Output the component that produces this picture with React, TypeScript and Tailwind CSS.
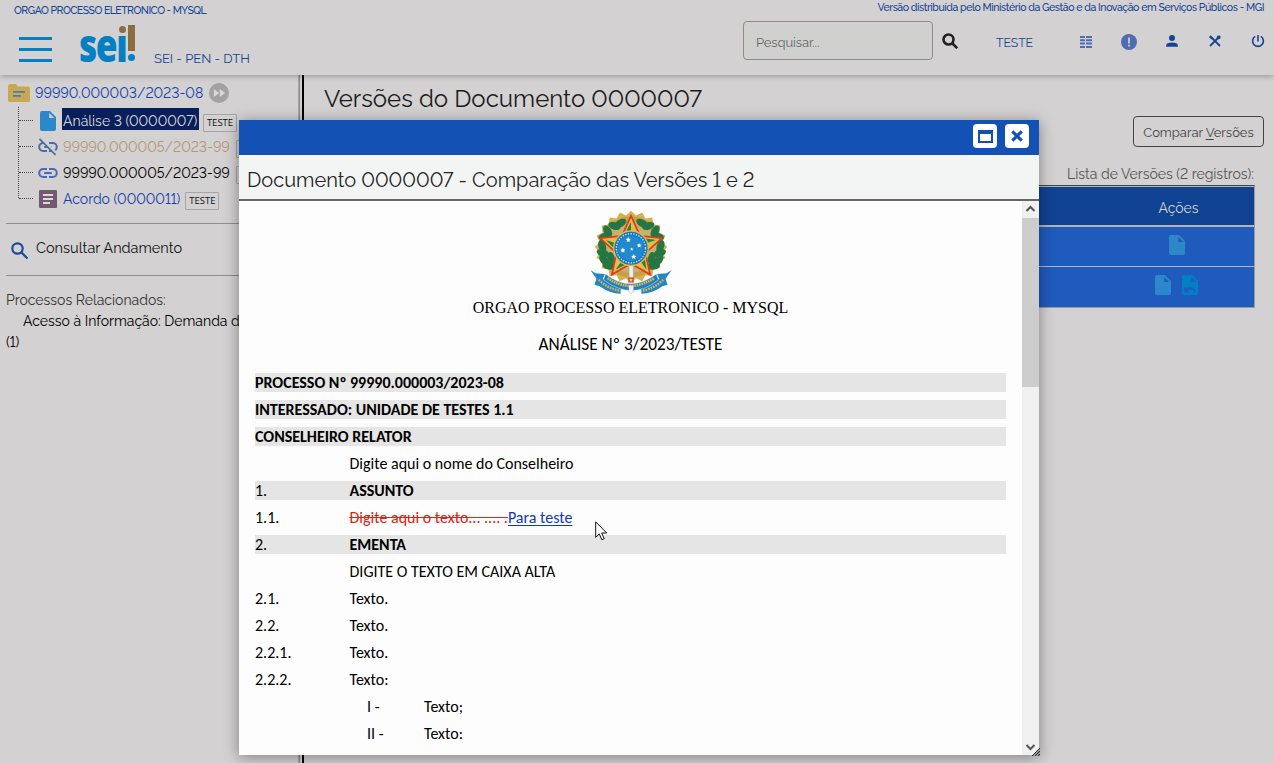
import React from "react";

type TProps = { className?: string; children: React.ReactNode };
const T = ({ className = "", children }: TProps) => (
  <span className={"inline-block shrink-0 whitespace-nowrap " + className}>{children}</span>
);

const DocIcon = ({ undo = false }: { undo?: boolean }) => (
  <svg viewBox="0 0 16 20" className="h-5 w-4 shrink-0">
    <path fill={undo ? "#0380c4" : "#2d88c9"} fillRule="evenodd" d="M2 0H10L16 6V18a2 2 0 0 1-2 2H2a2 2 0 0 1-2-2V2a2 2 0 0 1 2-2zM9.2 2V7H14.2z" />
    {undo && <path d="M2.2 11.800v5.400h5.400l-2-2q3.900-2 6.700 1.700l1.800-.9q-4.500-6.200-10-2.300z" fill="#1f5bbd" />}
  </svg>
);

const LinkIcon = ({ off = false }: { off?: boolean }) => (
  <svg viewBox="0 0 20 18" className="h-[18px] w-5 shrink-0" fill="none" stroke="#4a6bb0" strokeWidth="2">
    <path d="M9 5H5.200a4 4 0 0 0 0 8H9M11 5h3.800a4 4 0 0 1 0 8H11M6.200 9h7.600" />
    {off && <path d="M3.200 0L19 16" stroke="#d3d1d1" strokeWidth="2.500" />}
    {off && <path d="M1.500 .8L17.500 16.800" stroke="#4f719f" strokeWidth="1.800" />}
  </svg>
);

const star = (cx: number, cy: number, R: number, r: number, n = 5) =>
  Array.from({ length: n * 2 }, (_, i) => {
    const a = -Math.PI / 2 + (i * Math.PI) / n;
    const q = i % 2 ? r : R;
    return `${(cx + q * Math.cos(a)).toFixed(1)},${(cy + q * Math.sin(a)).toFixed(1)}`;
  }).join(" ");

const leaves = [
  [180, 68, -30], [162, 76, 20], [142, 92, 60], [134, 108, -10], [126, 136, 70], [128, 156, 20], [132, 178, 50], [146, 194, 10], [152, 172, 80],
  [244, 68, 30], [262, 76, -20], [282, 92, -60], [290, 108, 10], [298, 136, -70], [296, 156, -20], [292, 178, -50], [278, 194, -10], [272, 172, -80],
];

const Emblem = () => (
  <svg viewBox="87 29 248 254" className="h-[86px] w-[84px]">
    <polygon points={star(211, 138, 107, 94, 20)} fill="#d5b050" />
    <circle cx="211" cy="138" r="90" fill="#c79d45" />
    <circle cx="211" cy="138" r="76" fill="#c9b06a" />
    {leaves.map(([x, y, a], i) => (
      <ellipse key={i} cx={x} cy={y} rx="19" ry="11" fill="#227744" transform={`rotate(${a} ${x} ${y})`} />
    ))}
    <path d="M205 190h13v78q-6 12-13 0z" fill="#edf0f2" stroke="#9aa7b4" strokeWidth="2" />
    <polygon points={star(211, 142, 96, 45)} fill="#e9bd43" stroke="#db3b22" strokeWidth="5" />
    {[0, 72, 144, 216, 288].map((a) => (
      <path key={a} d="M211 64V112L188 109z" fill="#258049" transform={`rotate(${a} 211 142)`} />
    ))}
    <circle cx="211" cy="142" r="51" fill="#1678bd" stroke="#e4b83f" strokeWidth="4" />
    <circle cx="211" cy="142" r="43" fill="none" stroke="#cfe4f3" strokeWidth="4" strokeDasharray="4 4" />
    <circle cx="211" cy="142" r="38" fill="#2189cf" />
    {[[203, 117, 8], [187, 148, 8], [219, 167, 8], [235, 134, 7], [213, 145, 5]].map(([x, y, r], i) => (
      <polygon key={i} points={star(x, y, r, r * 0.5)} fill="#fff" />
    ))}
    <path d="M91 206l15 10 28 2-6 14 16 8 40 10-4 26q-30 0-62-22l-15-4 6-18zM331 206l-15 10-28 2 6 14-16 8-40 10 4 26q30 0 62-22l15-4-6-18z" fill="#2386c7" />
    <path d="M136 218q38 30 75 29t75-29l6 17q-40 33-81 32t-81-32z" fill="#1e80c3" stroke="#e5edf2" strokeWidth="1.500" />
    <path d="M142 230q36 24 69 23t69-23" fill="none" stroke="#d7b44b" strokeWidth="8" strokeDasharray="5 2" />
    <path d="M116 235q28 28 66 33M306 235q-28 28-66 33" fill="none" stroke="#d7b44b" strokeWidth="7" strokeDasharray="5 3" />
    <path d="M203 228h16v15h-16z" fill="#d94727" />
    <polygon points={star(211, 236, 6, 3)} fill="#f4d468" />
    <path d="M205 252h13v18q-6 12-13 0z" fill="#f3f5f6" stroke="#b7c3ca" strokeWidth="1.500" />
  </svg>
);

const Tag = ({ className = "", label = "TESTE" }: { className?: string; label?: string }) => (
  <span className={"mt-1.5 flex h-[18px] w-[34px] shrink-0 items-center justify-center rounded-[1px] border border-[#a5a5a5] font-['Open_Sans',sans-serif] text-[9.500px] text-[#111] " + className}><T>{label}</T></span>
);

const Row = ({ num, children, shade = false }: { num?: string; children?: React.ReactNode; shade?: boolean }) => (
  <div className={"mb-2 flex h-[19px] shrink-0 items-center whitespace-nowrap " + (shade ? "bg-[#e5e5e5]" : "")}>
    {num !== undefined && <span className="w-[94.500px] shrink-0">{num}</span>}
    {children}
  </div>
);

const Branch = ({ children }: { children: React.ReactNode }) => (
  <div className="flex h-[26px] shrink-0 items-center">
    <i className="ml-[19px] w-[14px] shrink-0 border-t border-dotted border-[#444]" />
    {children}
  </div>
);

export default function App() {
  return (
    <div className="relative flex h-[763px] w-[1274px] flex-col overflow-hidden bg-[#d3d1d1] font-['Raleway','Lato',sans-serif] text-[14px] lining-nums text-[#1b1b1b]">
      <header className="z-10 flex h-[75px] shrink-0 flex-col bg-[#d3d1d1] shadow-[0_1px_6px_rgba(0,0,0,0.3)]">
        <div className="flex h-[18px] items-start justify-between pl-[14px] pr-[10px] text-[10.500px] font-medium text-[#154596]">
          <T className="mt-[2px] leading-4 tracking-[-0.52px]">ORGAO PROCESSO ELETRONICO - MYSQL</T>
          <T className="leading-[15px] tracking-[-0.43px]">Versão distribuída pelo Ministério da Gestão e da Inovação em Serviços Públicos - MGI</T>
        </div>
        <div className="flex h-[57px] items-start text-[#154596]">
          <div className="ml-[19px] mt-[19px] flex w-[33px] shrink-0 flex-col gap-2">
            <i className="h-[3px] bg-[#0380c4]" /><i className="h-[3px] bg-[#0380c4]" /><i className="h-[3px] bg-[#0380c4]" />
          </div>
          <div className="relative ml-[27px] mt-[6px] h-[40px] w-[57px] shrink-0">
            <span className="absolute left-0 top-[-2px] origin-left scale-x-[0.77] font-['Open_Sans'] text-[46px] font-extrabold leading-[44px] tracking-[-2px] text-[#0380c4]">seı</span>
            <i className="absolute left-[40px] top-[2px] size-[7px] rounded-full bg-[#8a6e42]" />
            <i className="absolute left-[49px] top-[1px] h-[26px] w-[7px] bg-[#8a6e42]" />
            <i className="absolute left-[49px] top-[30px] size-[7px] rounded-full bg-[#0380c4]" />
          </div>
          <T className="ml-[18px] mt-[31px] text-[13px] leading-5">SEI - PEN - DTH</T>
          <div className="ml-auto mt-[3px] flex h-[39px] w-[190px] items-center rounded-[4px] border border-[#8b8b8b] bg-[#d0d0cf] pl-3 pt-1 text-[13px] text-[#686868]"><T className="tracking-[-0.1px]">Pesquisar...</T></div>
          <svg viewBox="0 0 16 16" className="ml-[9px] mt-[15px] size-4 shrink-0" fill="none" stroke="#222" strokeWidth="2.600"><circle cx="6.500" cy="6.500" r="5" /><path d="M10 10l5.200 5.200" /></svg>
          <T className="ml-[38px] mt-[15px] text-[12.200px] leading-5">TESTE</T>
          <svg viewBox="0 0 12 12" className="ml-[47px] mt-[18px] size-3 shrink-0" fill="#4f6cb3"><path d="M0 0h5v2H0zM6 0h6v2H6zM0 3.300h5v2H0zM6 3.300h6v2H6zM0 6.600h5v2H0zM6 6.600h6v2H6zM0 10h5v2H0zM6 10h6v2H6z" /></svg>
          <svg viewBox="0 0 16 16" className="ml-[29px] mt-[16px] size-4 shrink-0"><circle cx="8" cy="8" r="8" fill="#4f6cb3" /><path d="M7.200 3.500h1.600v6H7.200zM7.200 10.800h1.600v1.700H7.200z" fill="#ddd" /></svg>
          <svg viewBox="0 0 12 12" className="ml-[29px] mt-[17px] size-3 shrink-0" fill="#154596"><circle cx="6" cy="3" r="3" /><path d="M.2 11.800V10Q.5 7.500 6 7.500T11.800 10v1.800z" /></svg>
          <svg viewBox="0 0 12 12" className="ml-[31px] mt-[17px] size-3 shrink-0" fill="none" stroke="#154596" strokeWidth="1.800"><path d="M1 1l10 10M1 11L11 1" /><path d="M.8 1.600L3.200 3.800M8.200 3l1.600-2.200M9 3.800l2.300-1.600" strokeWidth="2" /></svg>
          <svg viewBox="0 0 12 12" className="ml-[31px] mr-[10px] mt-[17px] size-3 shrink-0 overflow-visible" fill="none" stroke="#154596" strokeWidth="1.600"><path d="M6 0v6.500M3.200 1.400a5.400 5.400 0 1 0 5.600 0" /></svg>
        </div>
      </header>
      <div className="flex min-h-0 flex-1">
        <aside className="flex w-[298px] shrink-0 flex-col overflow-hidden">
          <div className="flex h-[32px] shrink-0 items-center pl-2 pt-1 text-[#153fae]">
            <svg viewBox="0 0 22 18" className="mr-[5px] h-[18px] w-[22px] shrink-0"><path d="M1.500 0H8l2 2.500h10.500L22 4v13l-1 1H1l-1-1V1.500z" fill="#caa751" /><path d="M5 7h12v1.800H5zM5 11h8v1.800H5z" fill="#3b83bd" /></svg>
            <T>99990.000003/2023-08</T>
            <svg viewBox="0 0 20 20" className="ml-[6px] size-5 shrink-0"><circle cx="10" cy="10" r="10" fill="#a3a2a3" /><path d="M4.800 6L10.200 10 4.800 14zM10.800 6l5.400 4-5.400 4z" fill="#dad9d9" /></svg>
          </div>
          <div className="relative flex flex-col">
            <i className="absolute left-[18px] top-0 h-[91px] border-l border-dotted border-[#444]" />
            <Branch><span className="ml-[7px] mr-[6px] mt-[2px]"><DocIcon /></span><span className="-mt-0.5 flex h-[22px] w-[137px] items-center bg-[#091f5b] pl-0.5 pt-[4px] text-[#dadada]"><T className="-ml-px">Análise 3 (0000007)</T></span><Tag className="ml-1" /></Branch>
            <Branch><span className="ml-[5px] mr-[5px] mt-0.5"><LinkIcon off /></span><T className="mt-0.5 text-[#b3977a]">99990.000005/2023-99</T><Tag className="ml-[6px]" label="" /></Branch>
            <Branch><span className="ml-[5px] mr-[5px] mt-0.5"><LinkIcon /></span><T className="mt-0.5 text-black">99990.000005/2023-99</T><Tag className="ml-[6px]" label="" /></Branch>
            <Branch><svg viewBox="0 0 18 18" className="ml-[6px] mr-[6px] mt-0.5 size-[18px] shrink-0"><rect width="18" height="18" rx="1" fill="#735a72" /><path d="M4 4h10v2H4zM4 8h10v2H4zM4 12h7v2H4z" fill="#dcd8dc" /></svg><T className="mt-0.5 text-[#153fae]">Acordo (0000011)</T><Tag className="ml-[5px]" /></Branch>
          </div>
          <div className="ml-[6px] mt-[12px] flex h-[53px] shrink-0 items-center border-y border-[#8f8f8f] pl-[5px] text-[#111]">
            <svg viewBox="0 0 17 17" className="mr-2 mt-0.5 size-[17px] shrink-0" fill="none" stroke="#1b4b99" strokeWidth="2.200"><circle cx="6.500" cy="6.500" r="5.200" /><path d="M10.500 10.500l6 6" /></svg>
            <T className="-mt-[4px] text-[14.500px]">Consultar Andamento</T>
          </div>
          <div className="ml-[6px] mt-[14px] text-[14px] leading-[21px]">
            <T className="text-[#333]">Processos Relacionados:</T><br />
            <T className="ml-[17px] text-black">Acesso à Informação: Demanda d</T><br />
            <span className="text-black">(1)</span>
          </div>
        </aside>
        <div className="flex w-[6px] shrink-0 justify-end border-l border-[#a8a8a8]"><i className="w-[1px] bg-[#8a8a8a]" /><i className="ml-0.5 w-[2px] bg-black" /></div>
        <main className="flex flex-1 flex-col pl-5">
          <T className="mt-[8px] text-[24px] leading-[32px] text-[#1d1d1d]">Versões do Documento 0000007</T>
          <div className="mr-[10px] mt-px flex h-[31px] w-[131px] shrink-0 items-center justify-center self-end rounded-[4px] border border-[#444] pt-0.5 text-[13px] text-[#444]"><T>Comparar <span className="underline underline-offset-2">V</span>ersões</T></div>
          <T className="mr-[20px] mt-[17px] self-end leading-[20px] text-[#555]">Lista de Versões (2 registros):</T>
          <div className="mr-[19px] mt-px grid grid-cols-[1fr_151px] border-b border-r border-t border-b-[#9a9a9a] border-r-[#9a9a9a] border-t-[#3a4a4a] bg-[#b5b5b8] pt-px text-[#d3d3d3]">
            <div className="h-[38px] bg-[#104293]" /><div className="flex h-[38px] items-center justify-center bg-[#104293] pt-1"><T>Ações</T></div>
            <div className="mt-0.5 h-[39px] bg-[#1f5bbd]" /><div className="mt-0.5 flex h-[39px] items-center justify-center bg-[#1f5bbd] pb-[3px] pr-1"><DocIcon /></div>
            <div className="mt-px h-[40px] bg-[#1f5bbd]" /><div className="mt-px flex h-[40px] items-center justify-center gap-[11px] bg-[#1f5bbd] pb-1 pr-1"><DocIcon /><DocIcon undo /></div>
          </div>
        </main>
      </div>
      <section className="absolute left-[239px] top-[120px] z-20 flex h-[635px] w-[800px] flex-col bg-[#fdfdfd] shadow-[0_2px_14px_rgba(0,0,0,0.4)]">
        <div className="flex h-[35px] shrink-0 justify-end gap-2 bg-[#1351b4] pr-[10px] pt-1">
          <span className="flex size-6 items-center justify-center rounded-[4px] bg-white"><svg viewBox="0 0 15 13" className="h-[13px] w-[15px]"><path fillRule="evenodd" d="M0 0h15v13H0zM2 4v7h11V4z" fill="#1351a4" /></svg></span>
          <span className="flex size-6 items-center justify-center rounded-[4px] bg-white"><svg viewBox="0 0 11 11" className="size-[12px]"><path d="M1.200 1.200l8.600 8.600M9.800 1.200L1.200 9.800" stroke="#1351b4" strokeWidth="2.800" /></svg></span>
        </div>
        <div className="flex h-[46px] shrink-0 items-center border-b-2 border-[#666] bg-[#f3f5f4] pl-2 pt-1.5">
          <T className="text-[20px] leading-7 text-[#262626]">Documento 0000007 - Comparação das Versões 1 e 2</T>
        </div>
        <div className="flex min-h-0 flex-1">
          <div className="flex flex-1 flex-col overflow-hidden pl-4 pr-4 pt-[9px] font-['Carlito','Lato',sans-serif] text-[16px] leading-[19px] text-black">
            <div className="flex shrink-0 flex-col items-center">
              <Emblem />
              <T className="mt-0.5 font-['Liberation_Serif',serif] text-[16px]">ORGAO PROCESSO ELETRONICO - MYSQL</T>
              <T className="mb-[19px] mt-[18px] text-[17.300px]">ANÁLISE Nº 3/2023/TESTE</T>
            </div>
            <Row shade><b>PROCESSO Nº 99990.000003/2023-08</b></Row>
            <Row shade><b>INTERESSADO: UNIDADE DE TESTES 1.1</b></Row>
            <Row shade><b>CONSELHEIRO RELATOR</b></Row>
            <Row num="">Digite aqui o nome do Conselheiro</Row>
            <Row num="1." shade><b>ASSUNTO</b></Row>
            <Row num="1.1."><T className="text-[#dc2318] line-through">Digite aqui o texto... .... .</T><T className="text-[#1237b8] underline underline-offset-2">Para teste</T></Row>
            <Row num="2." shade><b>EMENTA</b></Row>
            <Row num="">DIGITE O TEXTO EM CAIXA ALTA</Row>
            <Row num="2.1.">Texto.</Row>
            <Row num="2.2.">Texto.</Row>
            <Row num="2.2.1.">Texto.</Row>
            <Row num="2.2.2.">Texto:</Row>
            <Row><span className="ml-[112px] w-[57px]">I -</span>Texto;</Row>
            <Row><span className="ml-[112px] w-[57px]">II -</span>Texto:</Row>
          </div>
          <div className="flex w-[17px] shrink-0 flex-col bg-[#f0f0f0]">
            <svg viewBox="0 0 17 17" className="size-[17px] shrink-0" fill="none" stroke="#555" strokeWidth="2"><path d="M4.500 10l4-4 4 4" /></svg>
            <i className="h-[169px] bg-[#cdcdcd]" />
            <svg viewBox="0 0 17 17" className="mt-auto size-[17px] shrink-0" fill="none" stroke="#555" strokeWidth="2"><path d="M4.500 7l4 4 4-4" /></svg>
          </div>
        </div>
        <svg viewBox="0 0 8 8" className="absolute -bottom-px -right-px size-2"><path d="M8 0v8H0z" fill="#9a9aa5" /><path d="M0 8L8 0M3 8l5-5M6 8l2-2" stroke="#222" strokeWidth="1" /></svg>
      </section>
      <svg viewBox="0 0 13 20" className="absolute left-[595px] top-[521px] z-30 h-5 w-[13px]"><path d="M.7.8v15.500l3.600-3.400 2.500 5.800 2.400-1-2.500-5.700h5z" fill="#fff" stroke="#111" strokeWidth="1" /></svg>
    </div>
  );
}
